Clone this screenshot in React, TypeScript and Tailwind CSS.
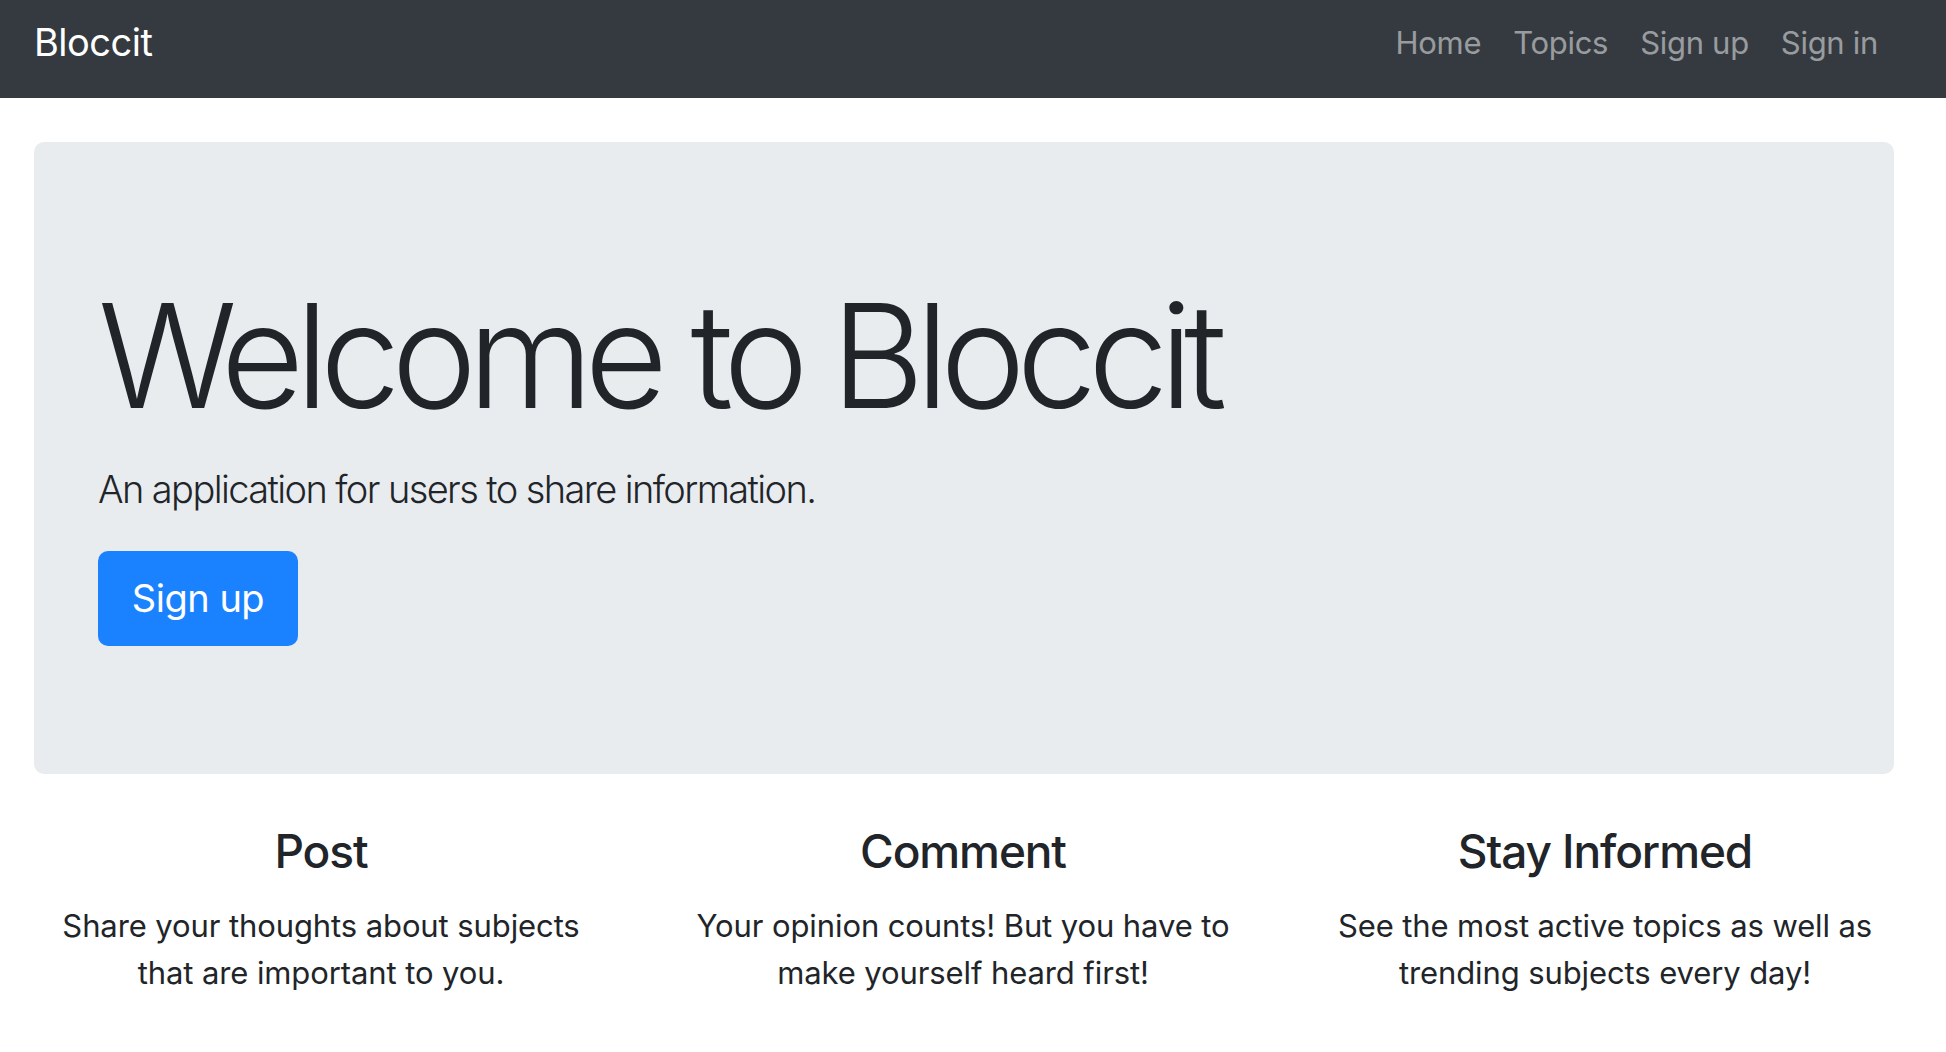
export default function App() {
  const features = [
    {
      title: "Post",
      text: "Share your thoughts about subjects that are important to you.",
    },
    {
      title: "Comment",
      text: "Your opinion counts! But you have to make yourself heard first!",
    },
    {
      title: "Stay Informed",
      text: "See the most active topics as well as trending subjects every day!",
    },
  ];

  return (
    <div className="min-h-screen bg-white font-['Inter','Liberation_Sans',sans-serif] text-[#212529]">
      <nav className="flex h-[98px] items-center justify-between bg-[#343a40] pb-[14px] pl-[34px] pr-[36px]">
        <a href="#" className="text-[38px] leading-none tracking-[-0.5px] text-white">
          Bloccit
        </a>
        <ul className="mr-[16px] flex items-center">
          {["Home", "Topics", "Sign up", "Sign in"].map((link) => (
            <li key={link}>
              <a
                href="#"
                className="block px-[16px] text-[31px] leading-none tracking-[-0.3px] text-white/50"
              >
                {link}
              </a>
            </li>
          ))}
        </ul>
      </nav>

      <div className="pl-[34px] pr-[52px] pt-[44px]">
        <div className="rounded-[10px] bg-[#e9ecef] px-[64px] py-[128px]">
          <h1 className="mb-[16px] text-[144px] font-light leading-[1.2] tracking-[-9px]">
            Welcome to Bloccit
          </h1>
          <p className="mb-[32px] text-[38px] font-light leading-[60px] tracking-[-1.6px]">
            An application for users to share information.
          </p>
          <button className="h-[95px] w-[200px] rounded-[10px] bg-[#1a82ff] text-[38px] tracking-[-0.5px] text-white">
            Sign up
          </button>
        </div>
      </div>

      <div className="mt-[50px] grid grid-cols-3 pr-[20px]">
        {features.map((f) => (
          <div key={f.title} className="px-[50px] text-center">
            <h4 className="mb-[23px] text-[46px] font-medium leading-[1.2] tracking-[-1.1px]">
              {f.title}
            </h4>
            <p className="text-[31px] leading-[47px] tracking-[-0.1px]">{f.text}</p>
          </div>
        ))}
      </div>
    </div>
  );
}
